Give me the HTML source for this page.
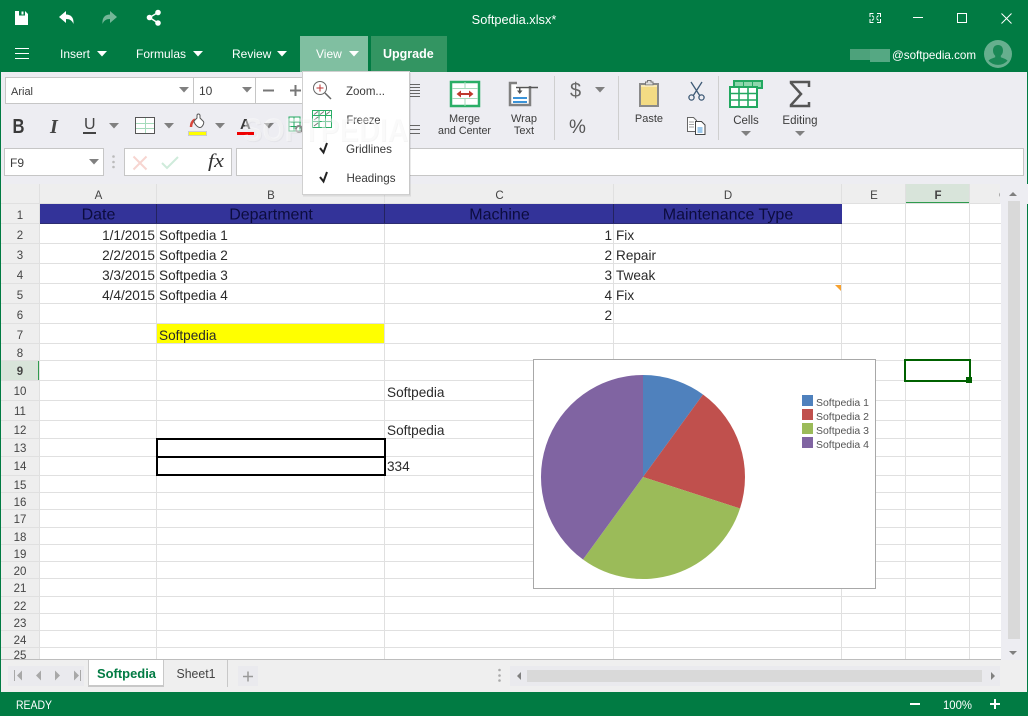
<!DOCTYPE html>
<html><head><meta charset="utf-8"><title>Softpedia.xlsx</title>
<style>
html,body{margin:0;padding:0;background:#fff;width:1028px;height:716px;overflow:hidden}
svg{display:block;font-family:"Liberation Sans",sans-serif}
.ui{fill:#3c3c3c;font-size:11px}
.w{fill:#fff;font-size:12px}
.hd{fill:#444;font-size:11.5px;text-anchor:middle}
.c{fill:#2a2a2a;font-size:13.6px}
.r{fill:#2a2a2a;font-size:13.6px;text-anchor:end}
.h1{fill:#0c0c3e;font-size:16px;text-anchor:middle}
.m{fill:#3a3a3a;font-size:12px}
.tri{fill:#808080}
.lg{fill:#555;font-size:10px}
</style></head><body>
<svg width="1028" height="716" viewBox="0 0 1028 716" xmlns="http://www.w3.org/2000/svg">
<!-- frame -->
<rect width="1028" height="716" fill="#017B43"/>
<rect x="1" y="72" width="1026" height="620" fill="#EDEDF2"/>

<!-- title bar icons -->
<path d="M15 11h10l3 3v11H15z" fill="#fff"/><rect x="19" y="11" width="6" height="4.500" fill="#017B43"/><rect x="21.500" y="11.500" width="2" height="3" fill="#fff"/>
<path d="M59 17l7-6v3.500c5 0 8 3 7.500 9.500-1.500-3.500-3.500-5-7.500-5v4z" fill="#fff"/>
<path d="M117 17l-7-6v3.500c-5 0-8 3-7.500 9.500 1.500-3.500 3.500-5 7.500-5v4z" fill="#fff" opacity=".45"/>
<g fill="#fff"><circle cx="158" cy="12.500" r="2.800"/><circle cx="158" cy="23" r="2.800"/><circle cx="149.500" cy="17.500" r="2.800"/></g>
<path d="M158 12.500l-8.500 5 8.500 5.500" stroke="#fff" stroke-width="1.400" fill="none"/>
<text x="514" y="24" class="w" text-anchor="middle" style="font-size:12.8px">Softpedia.xlsx*</text>
<!-- window controls -->
<g stroke="#fff" fill="none" stroke-width="1">
<path d="M870 17v-3.500h3.500M877 13.500h3.500V17M870 19v3.500h3.500M877 22.500h3.500V19"/>
<path d="M872 15.500l2 2M878.500 15.500l-2 2M872 20.500l2-2M878.500 20.500l-2-2"/>
<path d="M913 17.500h10"/>
<rect x="957.500" y="13.500" width="9" height="9"/>
<path d="M1001.500 13.500l10 10M1011.500 13.500l-10 10"/>
</g>

<!-- menu bar -->
<path d="M15 48.500h14M15 53.500h14M15 58.500h14" stroke="#fff" stroke-width="1"/>
<text x="60" y="58" class="w">Insert</text><path d="M97 51h10l-5 5.500z" fill="#fff"/>
<text x="136" y="58" class="w">Formulas</text><path d="M193 51h10l-5 5.500z" fill="#fff"/>
<text x="232" y="58" class="w">Review</text><path d="M277 51h10l-5 5.500z" fill="#fff"/>
<rect x="300" y="36" width="68" height="36" fill="#80BFA1"/>
<text x="316" y="58" class="w">View</text><path d="M349 51h10l-5 5.500z" fill="#fff"/>
<rect x="371" y="36" width="76" height="36" fill="#339562"/>
<text x="383" y="58" class="w" font-weight="bold" style="font-size:12.500px">Upgrade</text>
<rect x="850" y="49" width="20" height="11" fill="#4DA27B"/><rect x="870" y="49" width="20" height="13" fill="#55A883"/>
<text x="892" y="59" class="w" textLength="84" lengthAdjust="spacingAndGlyphs">@softpedia.com</text>
<circle cx="998" cy="54" r="14" fill="#66AF8E"/>
<path d="M998 45c3.500 0 5 2.500 5 5.500 0 2.500-1 4-2.200 5.200v1.600c2.500 1 5.500 1.800 6.700 3.500a13 13 0 0 1-19 0c1.200-1.700 4.200-2.500 6.700-3.500v-1.600c-1.200-1.200-2.200-2.700-2.200-5.200 0-3 1.500-5.500 5-5.500z" fill="#017B43" opacity=".75"/>

<!-- font boxes -->
<rect x="5.500" y="77.500" width="298" height="26" fill="#fff" stroke="#C6C6C6"/>
<path d="M193.500 77v27M255.500 77v27" stroke="#C6C6C6"/>
<text x="11" y="95" class="ui">Arial</text>
<path class="tri" d="M179 87h10l-5 5.500z"/>
<text x="199" y="95" class="ui" style="font-size:12px">10</text>
<path class="tri" d="M242 87h10l-5 5.500z"/>
<path d="M263 90.500h11" stroke="#777" stroke-width="2"/>
<path d="M290 90.500h11M295.500 85v11" stroke="#777" stroke-width="2"/>

<!-- format row -->
<text x="12.500" y="133" font-size="20" font-weight="bold" fill="#3a3a3a" textLength="12" lengthAdjust="spacingAndGlyphs">B</text>
<text x="50" y="133" font-size="20" font-style="italic" font-family="Liberation Serif" fill="#444" font-weight="bold">I</text>
<text x="84" y="129" font-size="16" fill="#444">U</text><rect x="83" y="132" width="13" height="2" fill="#444"/>
<path class="tri" d="M109 123h10l-5 5.500z"/>
<rect x="135.500" y="117.500" width="19" height="16" fill="#fff" stroke="#555"/>
<path d="M136 123.500h18M136 128.500h18M145.500 118v15" stroke="#A5DBBB"/>
<path class="tri" d="M164 123h10l-5 5.500z"/>
<path d="M191 127c0-4 1.500-6 4-7.500" stroke="#D9453A" stroke-width="2.500" fill="none"/>
<path d="M194 121l3-3v-2.500a1.500 1.500 0 0 1 3 0v2.500l3.500 3.500c1 2-1.500 6-3.500 6-2.500 0-6-4-6-6.500z" fill="#fff" stroke="#555"/>
<rect x="188.500" y="131.500" width="18" height="4" fill="#FFFF00" stroke="#ccc"/>
<path class="tri" d="M215 123h10l-5 5.500z"/>
<text x="240" y="129" font-size="15" font-weight="bold" fill="#3a3a3a">A</text><rect x="237" y="132" width="17" height="3" fill="#EE0000"/>
<path class="tri" d="M264 123h10l-5 5.500z"/>
<rect x="289" y="117" width="11" height="14" fill="#fff" stroke="#22A860"/><path d="M289 122h12M289 126.500h12M294 117v14" stroke="#22A860" fill="none"/>
<circle cx="299" cy="129" r="3" fill="none" stroke="#888" stroke-width="2"/>

<!-- align icons behind menu -->
<path d="M410 84.500h10M410 87.500h10M410 90.500h10M410 93.500h10M410 96.500h10" stroke="#666"/>
<path d="M410 125.500h10M410 129.500h10M410 133.500h10" stroke="#666"/>

<!-- merge -->
<rect x="451" y="82" width="28" height="24" fill="#fff" stroke="#2AAE66" stroke-width="2.500"/>
<path d="M452 88.500h26M452 98.500h26M465 82v6M465 99v7" stroke="#A5DBBB"/>
<path d="M458 94h14" stroke="#BE3A2E" stroke-width="2"/>
<path d="M461 90.500l-4.500 3.500 4.500 3.500zM469 90.500l4.500 3.500-4.500 3.500z" fill="#BE3A2E"/>
<text x="464.500" y="122" class="ui" text-anchor="middle" textLength="31" lengthAdjust="spacingAndGlyphs">Merge</text>
<text x="464.500" y="134" class="ui" text-anchor="middle" textLength="53" lengthAdjust="spacingAndGlyphs">and Center</text>
<!-- wrap -->
<rect x="510" y="83" width="20" height="22" fill="#fff" stroke="#808080" stroke-width="2.500"/>
<rect x="517" y="81" width="15" height="5" fill="#EDEDF2"/>
<rect x="509" y="82" width="8" height="2" fill="#808080"/>
<path d="M516 87.500h22" stroke="#555" stroke-width="1.500"/>
<path d="M517 90.500h5.500l-2.750 3.500z" fill="#555"/><rect x="519" y="88" width="1.500" height="3" fill="#555"/>
<rect x="513" y="97" width="14" height="2" fill="#3B93D8"/><rect x="513" y="101" width="14" height="2" fill="#3B93D8"/>
<text x="524" y="122" class="ui" text-anchor="middle">Wrap</text>
<text x="524" y="134" class="ui" text-anchor="middle">Text</text>

<path d="M554.500 76v64M618.500 76v64M718.500 76v64" stroke="#CFCFCF"/>

<!-- $ % -->
<text x="570" y="97" font-size="20" fill="#666">$</text>
<path class="tri" d="M595 87h10l-5 5.500z"/>
<text x="569" y="133" font-size="19" fill="#555">%</text>

<!-- paste -->
<rect x="640" y="84" width="18" height="22" fill="#F3DB84" stroke="#8a8a8a" stroke-width="2"/>
<path d="M645.500 85v-3h2v-1.500h3.500v1.500h2V85z" fill="#ddd" stroke="#777"/>
<rect x="641" y="85" width="16" height="2" fill="#fff" opacity=".4"/>
<text x="649" y="122" class="ui" text-anchor="middle">Paste</text>
<!-- scissors -->
<g stroke="#3E5A76" fill="none" stroke-width="1.300">
<path d="M691 82l9 14M702 82l-9 14"/><circle cx="691.500" cy="97.500" r="2.600"/><circle cx="701.500" cy="97.500" r="2.600"/>
</g>
<!-- copy -->
<path d="M687.500 117.500h6l3 3v11h-9z" fill="#fff" stroke="#666"/>
<path d="M689 122h5M689 124.500h5M689 127h5" stroke="#888" stroke-width=".8"/>
<path d="M695.500 121.500h6l3.500 3.500v9.500h-9.500z" fill="#fff" stroke="#444"/>
<path d="M697.500 128h5M697.500 130h5M697.500 132h5" stroke="#3B93D8" stroke-width=".9"/>

<!-- cells -->
<rect x="734" y="81" width="28" height="7" fill="#8DD6AB" stroke="#22A860" stroke-width="2"/>
<path d="M743.500 81v7M752.500 81v7" stroke="#22A860"/>
<rect x="730" y="87" width="27" height="20" fill="#fff" stroke="#22A860" stroke-width="2"/>
<path d="M731 93.500h25M731 100h25M739 87v20M748 87v20" stroke="#22A860" stroke-width="1.600"/>
<text x="746" y="124" class="ui" text-anchor="middle" style="font-size:11.500px">Cells</text>
<path class="tri" d="M741 131h10l-5 5z"/>
<!-- editing -->
<path d="M809 87v-5h-18v1l10 11-10 11v1h18v-4" fill="none" stroke="#555" stroke-width="2.500"/>
<text x="800" y="124" class="ui" text-anchor="middle" style="font-size:11.500px">Editing</text>
<path class="tri" d="M795 131h10l-5 5z"/>

<!-- formula bar -->
<rect x="4.500" y="148.500" width="99" height="27" fill="#fff" stroke="#C6C6C6"/>
<text x="10" y="167" class="ui" style="font-size:12px">F9</text>
<path class="tri" d="M89 159h10l-5 5.500z"/>
<g fill="#BBB"><circle cx="113.500" cy="156.500" r="1.300"/><circle cx="113.500" cy="162" r="1.300"/><circle cx="113.500" cy="167" r="1.300"/></g>
<rect x="124.500" y="148.500" width="107" height="27" fill="#fff" stroke="#C6C6C6"/>
<path d="M133.500 156.500l13 13M146.500 156.500l-13 13" stroke="#F7D5D0" stroke-width="2"/>
<path d="M162 163l5 5 11-11" stroke="#CFEBDB" stroke-width="2" fill="none"/>
<text x="208" y="167" font-family="Liberation Serif" font-style="italic" font-size="19" fill="#333" textLength="16" lengthAdjust="spacingAndGlyphs">fx</text>
<rect x="236.500" y="148.500" width="787" height="27" fill="#fff" stroke="#C6C6C6"/>

<!-- grid -->
<rect x="1" y="184" width="1000" height="20" fill="#EEEEEE"/>
<rect x="1" y="204" width="39" height="456" fill="#EEEEEE"/>
<rect x="40" y="204" width="961" height="456" fill="#fff"/>
<rect x="906" y="184" width="64" height="19" fill="#D8E4DA"/>
<rect x="906" y="202" width="64" height="1" fill="#2E9B4D"/>
<rect x="1" y="361" width="38" height="20" fill="#D8E4DA"/>
<rect x="38" y="361" width="1" height="20" fill="#2E9B4D"/>
<g stroke="#E0E0E0" fill="none">
<path d="M39.500 184v476M156.500 184v476M384.500 184v476M613.500 184v476M841.500 184v476M905.500 184v476M969.500 184v476"/>
<path d="M1 203.500h1000M1 223.500h1000M1 243.500h1000M1 263.500h1000M1 283.500h1000M1 303.500h1000M1 323.500h1000M1 343.500h1000M1 360.500h1000M1 380.500h1000M1 400.500h1000M1 420.500h1000M1 438.500h1000M1 456.500h1000M1 475.500h1000M1 492.500h1000M1 509.500h1000M1 527.500h1000M1 544.500h1000M1 561.500h1000M1 578.500h1000M1 596.500h1000M1 613.500h1000M1 630.500h1000M1 647.500h1000"/>
</g>
<rect x="1" y="659" width="1000" height="1" fill="#BDBDBD"/>

<!-- col heads -->
<text x="98.500" y="199" class="hd">A</text>
<text x="271" y="199" class="hd">B</text>
<text x="499.500" y="199" class="hd">C</text>
<text x="728" y="199" class="hd">D</text>
<text x="874" y="199" class="hd">E</text>
<text x="938" y="199" class="hd" font-weight="bold">F</text>
<text x="1003.500" y="199" class="hd">G</text>
<rect x="1000" y="184" width="28" height="20" fill="#EDEDF2"/>

<!-- row heads -->
<text x="20" y="219" class="hd">1</text><text x="20" y="239" class="hd">2</text><text x="20" y="259" class="hd">3</text><text x="20" y="279" class="hd">4</text><text x="20" y="299" class="hd">5</text><text x="20" y="319" class="hd">6</text><text x="20" y="339" class="hd">7</text><text x="20" y="357" class="hd">8</text><text x="20" y="375" class="hd" font-weight="bold">9</text><text x="20" y="395" class="hd">10</text><text x="20" y="415" class="hd">11</text><text x="20" y="434" class="hd">12</text><text x="20" y="452" class="hd">13</text><text x="20" y="470" class="hd">14</text><text x="20" y="489" class="hd">15</text><text x="20" y="506" class="hd">16</text><text x="20" y="523" class="hd">17</text><text x="20" y="541" class="hd">18</text><text x="20" y="558" class="hd">19</text><text x="20" y="575" class="hd">20</text><text x="20" y="592" class="hd">21</text><text x="20" y="610" class="hd">22</text><text x="20" y="627" class="hd">23</text><text x="20" y="644" class="hd">24</text><text x="20" y="659" class="hd">25</text>
<rect x="1" y="660" width="39" height="3" fill="#EEEEEE"/>

<!-- header row -->
<rect x="40" y="204" width="802" height="19" fill="#333399"/>
<path d="M156.500 204v19M384.500 204v19M613.500 204v19" stroke="#23235f"/>
<rect x="40" y="223" width="802" height="1" fill="#2d2d70"/>
<text x="98.500" y="219.500" class="h1">Date</text>
<text x="271" y="219.500" class="h1">Department</text>
<text x="499.500" y="219.500" class="h1">Machine</text>
<text x="728" y="219.500" class="h1">Maintenance Type</text>

<!-- cells -->
<rect x="157" y="324" width="227" height="19" fill="#FFFF00"/>
<text x="155" y="240" class="r">1/1/2015</text>
<text x="155" y="260" class="r">2/2/2015</text>
<text x="155" y="280" class="r">3/3/2015</text>
<text x="155" y="300" class="r">4/4/2015</text>
<text x="159" y="240" class="c">Softpedia 1</text>
<text x="159" y="260" class="c">Softpedia 2</text>
<text x="159" y="280" class="c">Softpedia 3</text>
<text x="159" y="300" class="c">Softpedia 4</text>
<text x="159" y="340" class="c">Softpedia</text>
<text x="612" y="240" class="r">1</text>
<text x="612" y="260" class="r">2</text>
<text x="612" y="280" class="r">3</text>
<text x="612" y="300" class="r">4</text>
<text x="612" y="320" class="r">2</text>
<text x="616" y="240" class="c">Fix</text>
<text x="616" y="260" class="c">Repair</text>
<text x="616" y="280" class="c">Tweak</text>
<text x="616" y="300" class="c">Fix</text>
<text x="387" y="397" class="c">Softpedia</text>
<text x="387" y="435" class="c">Softpedia</text>
<text x="387" y="471" class="c">334</text>
<path d="M835 285h6v6z" fill="#F7A12E"/>

<!-- bordered cells -->
<path d="M157 439h228v36H157zM157 457h228" fill="#fff" stroke="#000" stroke-width="2"/>

<!-- selection -->
<rect x="905" y="360" width="65" height="21" fill="none" stroke="#006100" stroke-width="2"/>
<rect x="966" y="377" width="6" height="6" fill="#006100"/>

<!-- chart -->
<rect x="533.500" y="359.500" width="342" height="229" fill="#fff" stroke="#A8A8A8"/>
<path d="M643 477V375A102 102 0 0 1 703 394.500z" fill="#4F81BD"/>
<path d="M643 477L703 394.500A102 102 0 0 1 740 508.500z" fill="#C0504D"/>
<path d="M643 477L740 508.500A102 102 0 0 1 583 559.500z" fill="#9BBB59"/>
<path d="M643 477L583 559.500A102 102 0 0 1 643 375z" fill="#8064A2"/>
<rect x="802" y="395" width="11" height="11" fill="#4F81BD"/>
<rect x="802" y="409" width="11" height="11" fill="#C0504D"/>
<rect x="802" y="423" width="11" height="11" fill="#9BBB59"/>
<rect x="802" y="437" width="11" height="11" fill="#8064A2"/>
<text x="816" y="406" class="lg" textLength="53" lengthAdjust="spacingAndGlyphs">Softpedia 1</text>
<text x="816" y="420" class="lg" textLength="53" lengthAdjust="spacingAndGlyphs">Softpedia 2</text>
<text x="816" y="434" class="lg" textLength="53" lengthAdjust="spacingAndGlyphs">Softpedia 3</text>
<text x="816" y="448" class="lg" textLength="53" lengthAdjust="spacingAndGlyphs">Softpedia 4</text>

<!-- v scrollbar -->
<rect x="1001" y="184" width="26" height="508" fill="#EDEDF2"/>
<rect x="1008" y="201" width="12" height="438" fill="#D9D9D9"/>
<path d="M1009 196h8l-4-4z" fill="#808080"/>
<path d="M1009 651h8l-4 4z" fill="#808080"/>

<!-- sheet bar -->
<rect x="1" y="660" width="1026" height="32" fill="#EFEFEF"/>
<rect x="8" y="666" width="76" height="20" fill="#EAEAEE"/>
<g fill="#A8A8A8">
<path d="M14 670v11h1v-11zM22 670.500v10l-5-5z"/><path d="M41 670.500v10l-5-5z"/><path d="M55 670.500v10l5-5z"/><path d="M74 670.500v10l5-5zM80 670v11h1v-11z"/>
</g>
<rect x="89" y="660" width="75" height="26" fill="#fff"/>
<rect x="89" y="685" width="75" height="2" fill="#C8C8C8"/>
<rect x="88" y="660" width="1" height="27" fill="#C8C8C8"/>
<rect x="163" y="660" width="1" height="27" fill="#C8C8C8"/>
<text x="97" y="678" font-size="12.500" font-weight="bold" fill="#017B43" textLength="59" lengthAdjust="spacingAndGlyphs">Softpedia</text>
<text x="176.500" y="678" font-size="12.500" fill="#444" textLength="39" lengthAdjust="spacingAndGlyphs">Sheet1</text>
<rect x="227" y="660" width="1" height="27" fill="#C8C8C8"/>
<rect x="238" y="666" width="20" height="20" fill="#EAEAEE"/>
<path d="M243 676.500h10M248 671.500v10" stroke="#999" stroke-width="1.500"/>
<g fill="#AAA"><circle cx="499.500" cy="670" r="1.300"/><circle cx="499.500" cy="675.500" r="1.300"/><circle cx="499.500" cy="680.500" r="1.300"/></g>
<rect x="510" y="666" width="490" height="20" fill="#EAEAEE"/>
<rect x="527" y="670" width="455" height="12" fill="#D9D9D9"/>
<path d="M521 672v8l-4-4z" fill="#808080"/>
<path d="M991 672v8l4-4z" fill="#808080"/>

<!-- status -->
<text x="16" y="709" class="w" textLength="36" lengthAdjust="spacingAndGlyphs">READY</text>
<path d="M910 704h10M990 704h10M995 699v10" stroke="#fff" stroke-width="2"/>
<text x="943" y="709" class="w" textLength="29" lengthAdjust="spacingAndGlyphs">100%</text>

<!-- dropdown -->
<rect x="302.500" y="71.500" width="107" height="123" fill="#fff" stroke="#D0D0D0"/>
<rect x="409.500" y="73" width="1.500" height="122" fill="#000" opacity=".08"/>
<rect x="303" y="195" width="108" height="1.500" fill="#000" opacity=".08"/>
<circle cx="320" cy="88" r="6.500" fill="#fff" stroke="#666"/>
<path d="M325 93l6 6" stroke="#666" stroke-width="1.500"/>
<path d="M316.500 88h7M320 84.500v7" stroke="#B33" stroke-width="1"/>
<text x="346" y="95" class="m" textLength="39" lengthAdjust="spacingAndGlyphs">Zoom...</text>
<rect x="312.500" y="110.500" width="19" height="17" fill="#fff" stroke="#2AAE66"/>
<path d="M313 115.500h18M313 121.500h18M319 110v17M325.500 110v17" stroke="#2AAE66"/>
<path d="M314 114.500l4-3M320 114.500l4-3M326 114.500l4-3M314 120l4-3M314 126l4-3" stroke="#777"/>
<text x="346.500" y="124" class="m" textLength="34" lengthAdjust="spacingAndGlyphs">Freeze</text>
<path d="M320 148l3.500 4.500 3.500-9.500" fill="none" stroke="#222" stroke-width="2"/>
<text x="346" y="153" class="m" textLength="46" lengthAdjust="spacingAndGlyphs">Gridlines</text>
<path d="M320 177l3.500 4.500 3.500-9.500" fill="none" stroke="#222" stroke-width="2"/>
<text x="346.500" y="182" class="m" textLength="49" lengthAdjust="spacingAndGlyphs">Headings</text>

<!-- watermark -->
<text x="244" y="142" font-size="32" font-weight="bold" fill="#000" opacity=".03" textLength="165" lengthAdjust="spacingAndGlyphs">SOFTPEDIA</text>
<text x="243" y="141" font-size="32" font-weight="bold" fill="#fff" opacity=".45" textLength="165" lengthAdjust="spacingAndGlyphs">SOFTPEDIA</text>
<rect x="0" y="184" width="1" height="508" fill="#017B43"/>
</svg>
</body></html>
